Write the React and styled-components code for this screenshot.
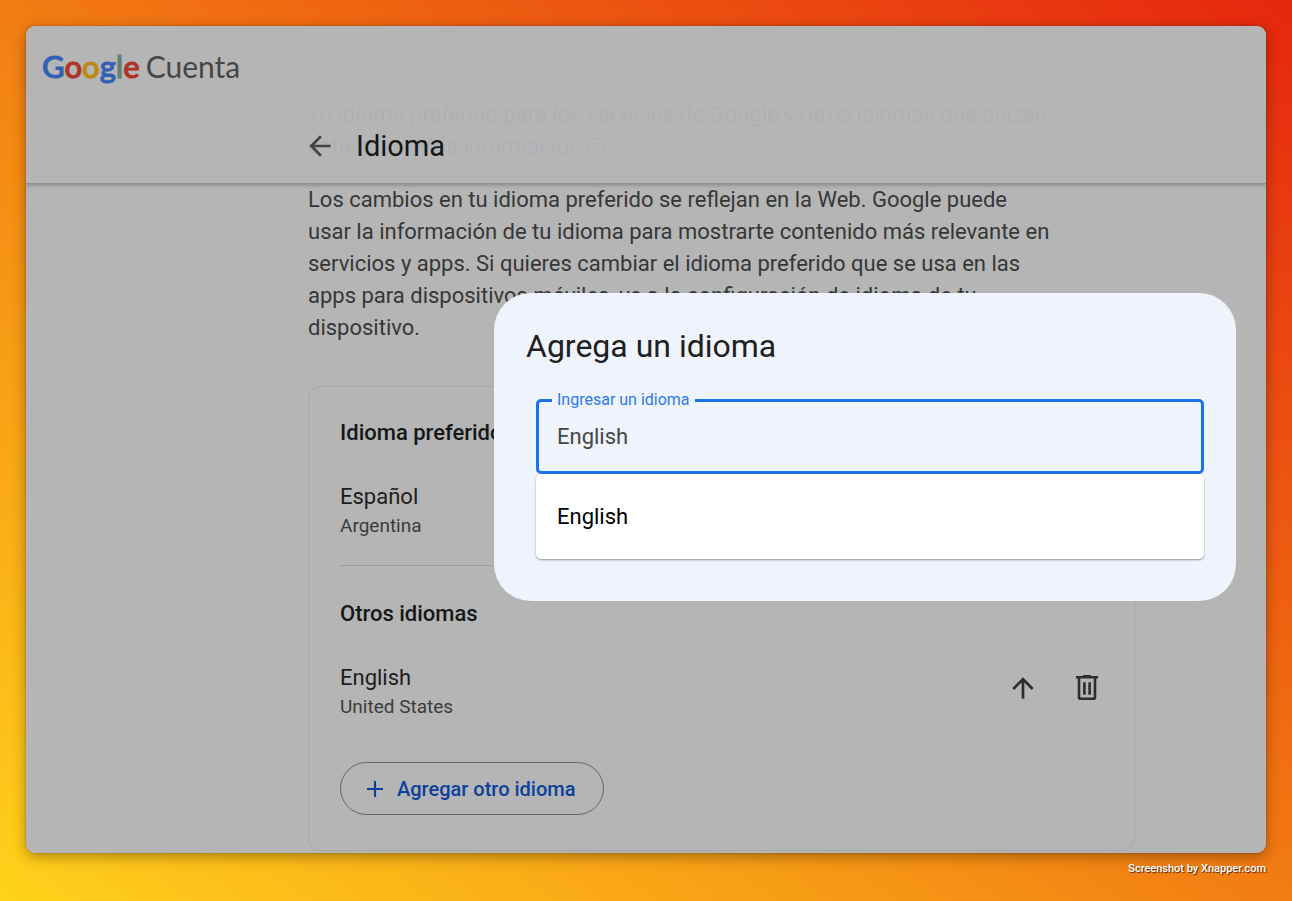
import React, { useState } from 'react';
import styled, { createGlobalStyle } from 'styled-components';
import { MdArrowBack, MdArrowUpward } from 'react-icons/md';

const Global = createGlobalStyle`
  *, *::before, *::after { box-sizing: border-box; }
  body { margin: 0; font-family: Roboto, "Liberation Sans", sans-serif; }
  h1, h2, h3, p, ul { margin: 0; padding: 0; font-weight: 400; }
  button { font: inherit; border: 0; background: none; padding: 0; cursor: pointer; }
`;

const Backdrop = styled.div`
  display: flex;
  flex-direction: column;
  min-height: 100vh;
  padding: 26px 26px 0;
  background: linear-gradient(to top right, #ffd21a 0%, #f27c12 50%, #e6260e 100%);
`;

const Window = styled.div`
  position: relative;
  flex: 1;
  overflow: hidden;
  background: #b5b5b5;
  border-radius: 9px;
`;

const WindowShadow = styled.div`
  display: flex;
  flex: 1;
  border-radius: 9px;
  box-shadow: 0 4px 14px rgba(0, 0, 0, 0.32), 0 0 2px rgba(0, 0, 0, 0.3);
`;

const Header = styled.header`
  position: absolute;
  top: 0;
  left: 0;
  right: 0;
  background: rgba(181, 181, 181, 0.96);
  border-bottom: 1px solid #919193;
  box-shadow: 0 1px 4px rgba(0, 0, 0, 0.28);
`;

const Brand = styled.a`
  display: flex;
  align-items: baseline;
  gap: 6px;
  padding: 20px 16px 0;
  color: #444746;
  font-family: Lato, sans-serif;
  font-size: 30px;
  line-height: 40px;
  text-decoration: none;
`;

const Wordmark = styled.span`
  font-size: 31px;
  font-weight: 500;
`;

const Letter = styled.span`
  color: ${(p) => p.$tint};
  -webkit-text-stroke: 1px ${(p) => p.$tint};
`;

const TitleRow = styled.div`
  display: flex;
  align-items: center;
  gap: 20px;
  padding: 40px 0 17px 278px;
`;

const IconButton = styled.button`
  display: grid;
  place-items: center;
  width: 32px;
  height: 32px;
  color: ${(p) => p.$color || '#2c2d2d'};
`;

const PageTitle = styled.h1`
  color: #161717;
  font-size: 29px;
  line-height: 40px;
`;

const Main = styled.main`
  max-width: 1109px;
  padding: 73px 0 2px 282px;
`;

const Paragraph = styled.p`
  margin-bottom: ${(p) => p.$after}px;
  color: #353737;
  font-size: 22px;
  line-height: 32px;
  white-space: nowrap;
`;

const MoreLink = styled.a`
  color: #1a3fd0;
  text-decoration: none;
`;

const HelpMark = styled.svg`
  vertical-align: -3px;
`;

const Card = styled.section`
  padding: 32px 31px 35px;
  border: 1px solid #a6a7a8;
  border-radius: 12px;
`;

const SectionTitle = styled.h2`
  margin-bottom: 35px;
  color: #161717;
  font-size: 22px;
  font-weight: 500;
  line-height: 28px;
`;

const LanguageRow = styled.div`
  display: flex;
  align-items: flex-start;
  justify-content: space-between;
`;

const LanguageName = styled.h3`
  color: #1c1d1d;
  font-size: 22px;
  line-height: 30px;
`;

const Region = styled.p`
  color: #3a3c3c;
  font-size: 19px;
  line-height: 28px;
`;

const Actions = styled.div`
  display: flex;
  gap: 32px;
  padding-top: 9px;
`;

const Divider = styled.hr`
  height: 1px;
  margin: 25px 0 34px;
  border: 0;
  background: #9b9c9c;
`;

const AddButton = styled.button`
  && {
    display: flex;
    align-items: center;
    gap: 14px;
    height: 53px;
    margin-top: 41px;
    padding: 0 27px 0 26px;
    border: 1px solid #626464;
    border-radius: 27px;
    color: #0b409c;
    font-size: 20px;
    font-weight: 500;
  }
`;

const Dialog = styled.div`
  position: absolute;
  top: 267px;
  right: 30px;
  width: 60%;
  max-width: 742px;
  padding: 32px 32px 42px;
  background: #eff3fb;
  border-radius: 37px;
`;

const DialogTitle = styled.h2`
  color: #1f2020;
  font-size: 32px;
  line-height: 42px;
`;

const Combo = styled.div`
  margin-top: 23px;
  padding: 0 0 0 10px;
`;

const Field = styled.fieldset`
  height: 84px;
  min-width: 0;
  margin: 0;
  padding: 0 18px;
  border: 3px solid #1a73e8;
  border-radius: 5px;
`;

const Legend = styled.legend`
  margin-left: -5px;
  padding: 0 5px;
  color: #2b7bee;
  font-size: 16px;
  line-height: 20px;
`;

const Input = styled.input`
  width: 100%;
  height: 52px;
  padding: 0;
  border: 0;
  outline: 0;
  background: transparent;
  color: #444746;
  font: 22px/28px Roboto, sans-serif;
`;

const Options = styled.ul`
  list-style: none;
  background: #fff;
  border-radius: 5px;
  box-shadow: 0 1px 2px rgba(0, 0, 0, 0.4);
`;

const Option = styled.li`
  padding: 28px 21px;
  color: #000;
  font-size: 22px;
  line-height: 29px;
`;

const Credit = styled.footer`
  height: 48px;
  padding-top: 8px;
  color: #fff;
  font: 500 11px/16px Roboto, sans-serif;
  text-align: right;
  text-shadow: 1px 1px 1px rgba(0, 0, 0, 0.7);
`;

const HelpIcon = () => (
  <HelpMark width="20" height="20" viewBox="0 0 20 20" fill="none" stroke="#353737" strokeWidth="1.6">
    <circle cx="10" cy="10" r="8.5" />
    <path d="M7.5 8a2.5 2.5 0 1 1 3.8 2.1c-.9.6-1.3 1-1.3 2M10 13.6v1.6" />
  </HelpMark>
);

const TrashIcon = () => (
  <svg width="32" height="32" viewBox="0 0 32 32" fill="none" stroke="currentColor">
    <path d="M5 5.3h22M12 4.4h8" strokeWidth="2.6" />
    <path d="M8 6v19.2q0 1.5 1.5 1.5h13q1.5 0 1.5-1.5V6" strokeWidth="2.6" />
    <path d="M13.4 10.3v12.4M18.6 10.3v12.4" strokeWidth="2.6" />
  </svg>
);

const PlusIcon = () => (
  <svg width="16" height="16" viewBox="0 0 16 16" stroke="currentColor" strokeWidth="2.2">
    <path d="M8 0v16M0 8h16" />
  </svg>
);

const logo = [
  ['G', '#3161b5'], ['o', '#b03327'], ['o', '#bd8a10'],
  ['g', '#3161b5'], ['l', '#647f72'], ['e', '#b03327'],
];

function Language({ name, region, children }) {
  return (
    <LanguageRow>
      <div>
        <LanguageName>{name}</LanguageName>
        <Region>{region}</Region>
      </div>
      {children}
    </LanguageRow>
  );
}

export default function App() {
  const [query, setQuery] = useState('English');
  return (
    <Backdrop>
      <Global />
      <WindowShadow>
        <Window>
          <Main>
            <Paragraph $after={21}>
              Tu idioma preferido para los servicios de Google y otros idiomas que quizás<br />
              entiendas. <MoreLink href="#info">Más información</MoreLink> <HelpIcon />
            </Paragraph>
            <Paragraph $after={42}>
              Los cambios en tu idioma preferido se reflejan en la Web. Google puede<br />
              usar la información de tu idioma para mostrarte contenido más relevante en<br />
              servicios y apps. Si quieres cambiar el idioma preferido que se usa en las<br />
              apps para dispositivos móviles, ve a la configuración de idioma de tu<br />
              dispositivo.
            </Paragraph>
            <Card>
              <SectionTitle>Idioma preferido</SectionTitle>
              <Language name="Español" region="Argentina" />
              <Divider />
              <SectionTitle>Otros idiomas</SectionTitle>
              <Language name="English" region="United States">
                <Actions>
                  <IconButton aria-label="Mover hacia arriba"><MdArrowUpward size={32} /></IconButton>
                  <IconButton aria-label="Borrar"><TrashIcon /></IconButton>
                </Actions>
              </Language>
              <AddButton><PlusIcon />Agregar otro idioma</AddButton>
            </Card>
          </Main>
          <Header>
            <Brand href="#cuenta">
              <Wordmark>
                {logo.map(([char, tint], i) => <Letter key={i} $tint={tint}>{char}</Letter>)}
              </Wordmark>
              <span>Cuenta</span>
            </Brand>
            <TitleRow>
              <IconButton $color="#444646" aria-label="Atrás"><MdArrowBack size={32} /></IconButton>
              <PageTitle>Idioma</PageTitle>
            </TitleRow>
          </Header>
          <Dialog role="dialog" aria-labelledby="dialog-title">
            <DialogTitle id="dialog-title">Agrega un idioma</DialogTitle>
            <Combo>
              <Field>
                <Legend><label htmlFor="language">Ingresar un idioma</label></Legend>
                <Input id="language" value={query} onChange={(e) => setQuery(e.target.value)} />
              </Field>
              <Options role="listbox">
                <Option role="option" aria-selected="false">English</Option>
              </Options>
            </Combo>
          </Dialog>
        </Window>
      </WindowShadow>
      <Credit>Screenshot by Xnapper.com</Credit>
    </Backdrop>
  );
}
